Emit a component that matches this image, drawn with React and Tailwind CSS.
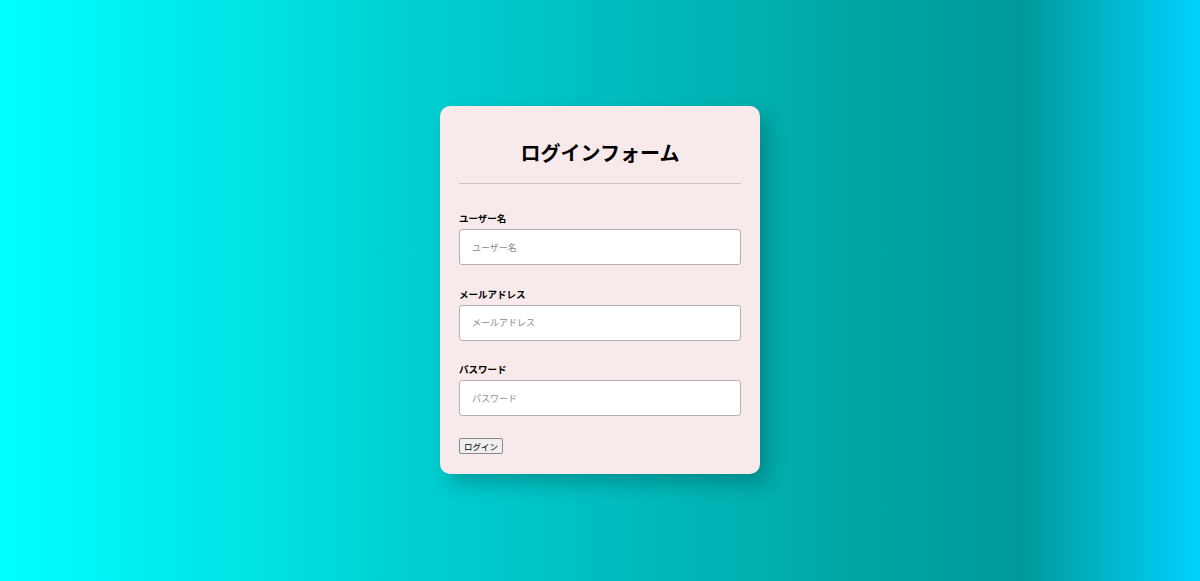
export default function App() {
  const fields = [
    { id: 'username', label: 'ユーザー名', type: 'text' },
    { id: 'email', label: 'メールアドレス', type: 'email' },
    { id: 'password', label: 'パスワード', type: 'password', placeholder: 'パスワード' },
  ]

  return (
    <div
      className="w-full h-[581px] flex items-center justify-center bg-[linear-gradient(to_right,#00ffff_0%,#00cfd2_35%,#00a5a5_72%,#009999_85%,#00d2ff_100%)]"
      style={{ fontFamily: '"Noto Sans CJK JP", "Noto Sans", sans-serif' }}
    >
      <div className="w-[320px] h-[368px] mt-[-1px] rounded-[10px] bg-[#f8eaea] px-[19px] pt-5 pb-5 shadow-[8px_10px_20px_rgba(0,0,0,0.22)]">
        <h1 className="mt-[11px] h-8 leading-8 text-center text-[20px] font-bold text-black">ログインフォーム</h1>
        <hr className="mt-[14px] border-0 border-t border-[#c8c4c4]" />

        <div className="mt-[28px]">
          {fields.map((f, i) => (
            <div key={f.id} className={i > 0 ? 'mt-[22.5px]' : ''}>
              <label htmlFor={f.id} className="block h-3 leading-3 text-[9.5px] font-bold text-black">
                {f.label}
              </label>
              <input
                id={f.id}
                type={f.type}
                placeholder={f.placeholder || f.label}
                className="mt-[5px] block w-full h-[36px] rounded-[3px] border border-[#b5b0b0] bg-white px-3 text-[9px] text-black placeholder:text-[#8a8a8a] outline-none"
              />
            </div>
          ))}
        </div>

        <button className="mt-[22px] block h-4 px-[4px] leading-none rounded-[2px] border border-[#8a8a8a] bg-[#efefef] text-[8.5px] text-black">
          ログイン
        </button>
      </div>
    </div>
  )
}
